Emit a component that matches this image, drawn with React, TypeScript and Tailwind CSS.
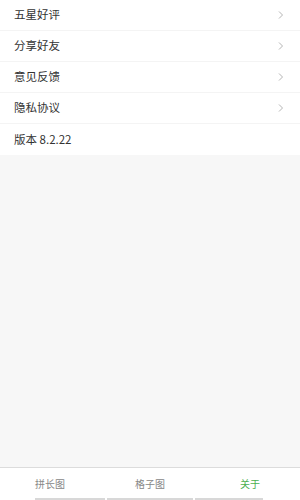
import React from "react";

const items = ["五星好评", "分享好友", "意见反馈", "隐私协议"];

function Chevron() {
  return (
    <svg width="8" height="10" viewBox="0 0 8 10" fill="none">
      <path d="M2 1.5 L5.5 5 L2 8.5" stroke="#b5b5b5" strokeWidth="1" />
    </svg>
  );
}

export default function App() {
  return (
    <div
      className="w-[300px] h-[500px] flex flex-col bg-[#f7f7f7] overflow-hidden"
      style={{ fontFamily: '"Noto Sans CJK SC", "Noto Sans", sans-serif' }}
    >
      <div className="bg-white flex flex-col">
        {items.map((t) => (
          <div
            key={t}
            className="h-[31px] flex items-center justify-between pl-[14px] pr-[15px] border-b border-[#f4f4f4]"
          >
            <span className="text-[11.5px] text-[#333] leading-none">{t}</span>
            <Chevron />
          </div>
        ))}
        <div className="h-[31px] flex items-center pl-[14px]">
          <span className="text-[11.5px] text-[#333] leading-none">版本 8.2.22</span>
        </div>
      </div>
      <div className="flex-1" />
      <div className="h-[33px] bg-white border-t border-[#dcdcdc] flex flex-col">
        <div className="flex-1 flex items-center">
          <div className="flex-1 text-center text-[10px] text-[#888]">拼长图</div>
          <div className="flex-1 text-center text-[10px] text-[#888]">格子图</div>
          <div className="flex-1 text-center text-[10px] text-[#4caf50]">关于</div>
        </div>
        <div className="h-[2px] flex pl-[35px] gap-[2px]">
          <div className="w-[70px] bg-[#d8d8d8]" />
          <div className="w-[86px] bg-[#d8d8d8]" />
          <div className="w-[68px] bg-[#d8d8d8]" />
        </div>
      </div>
    </div>
  );
}
